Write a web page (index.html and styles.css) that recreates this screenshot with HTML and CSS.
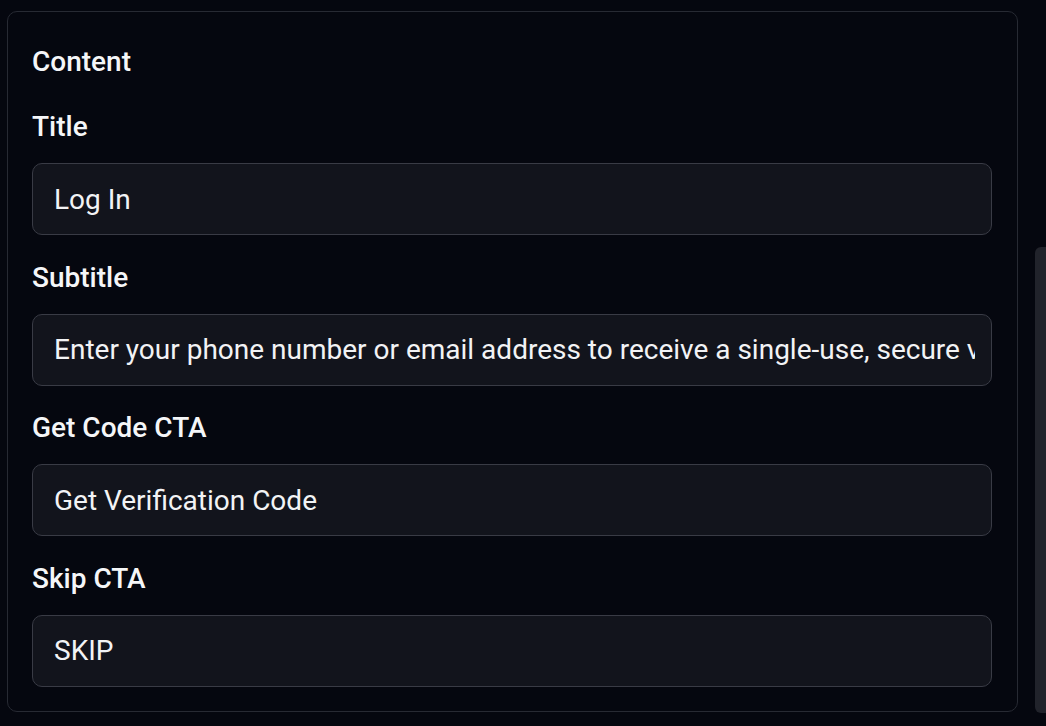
FILE: index.html
```html
<!DOCTYPE html>
<html lang="en">
<head>
<meta charset="utf-8">
<title>Content</title>
<link rel="stylesheet" href="styles.css">
</head>
<body>
<div class="page">
  <section class="card">
    <h2 class="card-title">Content</h2>
    <div class="fields">
      <div class="field">
        <label class="field-label" for="f-title">Title</label>
        <input class="field-input" id="f-title" type="text" value="Log In">
      </div>
      <div class="field">
        <label class="field-label" for="f-sub">Subtitle</label>
        <input class="field-input" id="f-sub" type="text" value="Enter your phone number or email address to receive a single-use, secure verification code.">
      </div>
      <div class="field">
        <label class="field-label" for="f-get">Get Code CTA</label>
        <input class="field-input" id="f-get" type="text" value="Get Verification Code">
      </div>
      <div class="field">
        <label class="field-label" for="f-skip">Skip CTA</label>
        <input class="field-input" id="f-skip" type="text" value="SKIP">
      </div>
    </div>
  </section>
  <div class="scroll-thumb"></div>
</div>
</body>
</html>
```
FILE: styles.css
```css
html, body {
  margin: 0;
  padding: 0;
  background: #05070f;
  height: 100%;
  overflow: hidden;
}
body {
  font-family: Roboto, "Liberation Sans", sans-serif;
  color: #f5f6f8;
}
.page {
  position: relative;
  height: 726px;
  padding: 11px 28px 0 7px;
  box-sizing: border-box;
}
.card {
  border: 1px solid #272a33;
  border-radius: 10px;
  padding: 32px 25px 24px 24px;
  background: #05070f;
}
.card-title {
  margin: 0 0 29px 0;
  font-size: 28px;
  line-height: 36px;
  font-weight: 500;
  color: #f5f6f8;
}
.fields {
  display: flex;
  flex-direction: column;
  gap: 24.5px;
}
.field {
  display: flex;
  flex-direction: column;
  gap: 18px;
}
.field-label {
  font-size: 28px;
  line-height: 36px;
  font-weight: 500;
  color: #f5f6f8;
}
.field-input {
  display: block;
  width: 100%;
  height: 72px;
  box-sizing: border-box;
  margin: 0;
  padding: 0 16px 0 21px;
  background: #12141c;
  border: 1.5px solid #393b45;
  border-radius: 10px;
  font-family: Roboto, "Liberation Sans", sans-serif;
  font-size: 28px;
  font-weight: 400;
  color: #f2f3f5;
  outline: none;
}
.scroll-thumb {
  position: absolute;
  right: 0;
  top: 247px;
  width: 11px;
  height: 466px;
  background: #21232b;
  border-radius: 6px 0 0 6px;
}
```
